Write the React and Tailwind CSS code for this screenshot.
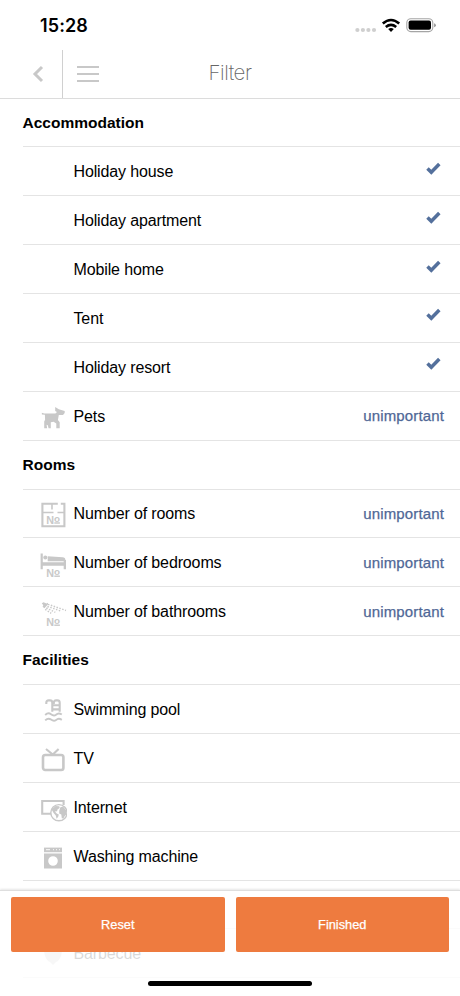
const ICON_COLOR = "#c8c8c8";

function NumberLabel({ x, y }) {
  return (
    <>
      <text x={x} y={y} fontSize="10.8" fontWeight="700" fill={ICON_COLOR}>
        N
      </text>
      <text x={x + 7.8} y={y - 2} fontSize="9.8" fontWeight="700" fill={ICON_COLOR}>
        o
      </text>
      <rect x={x + 8} y={y - 1.3} width="5.6" height="1.4" fill={ICON_COLOR} />
    </>
  );
}

// Every icon is drawn in a 28x28 box
const icons = {
  pets: (
    <path
      fill={ICON_COLOR}
      d="M2.8 8.7l2.4.9h11.2l1.6-1.5-1.8-1V3l3.6 2.3 5.9 1.6v2.2L24 10.9l-4.2.1-.9 5 1.8 2.2v6h-3.4v-4.6l-2.7-1.8-2.8.4v6H9.6l-.8-3-1.2-.5.5 3.5H5.2v-6.6l.9-1.8-.2-5-3-.3z"
    />
  ),
  rooms: (
    <>
      <path
        d="M18.8 2.8H3.4v22.4h22V2.8h-3.6"
        fill="none"
        stroke={ICON_COLOR}
        strokeWidth="2.1"
      />
      <path
        d="M13 2.5v6M4 11.5h10.5M18.5 11.5h6.5"
        fill="none"
        stroke={ICON_COLOR}
        strokeWidth="1.6"
      />
      <NumberLabel x={7.3} y={22.6} />
    </>
  ),
  bedrooms: (
    <>
      <path
        d="M1.6 3.6h2.2v8.6h20.9V10H27v9.2h-2.3v-3.4H3.8v3.4H1.6z"
        fill={ICON_COLOR}
      />
      <path d="M8.7 6.3l15 .9q2.7.3 2.7 2.8v1.2H8.7z" fill={ICON_COLOR} />
      <circle cx="6.3" cy="7.6" r="2" fill={ICON_COLOR} />
      <NumberLabel x={7.3} y={26.8} />
    </>
  ),
  bathrooms: (
    <>
      <path
        d="M2.8 4.2l1.7-1 3 1.2 1.3-.6.3 1.5-3.7 4-1.8-1.6.7-1.4z"
        fill={ICON_COLOR}
      />
      <path
        d="M9 5.3l18 6.2M8.4 7.5l13 4.4M7.3 9l9 4.3M6.2 10.3l6 4"
        fill="none"
        stroke={ICON_COLOR}
        strokeWidth="1.4"
        strokeDasharray="1.5 1.5"
      />
      <NumberLabel x={7.3} y={26.8} />
    </>
  ),
  pool: (
    <>
      <path
        d="M7.3 7V5.7q0-2.3 2.3-2.3h1.4q2.3 0 2.3 2.3v9.1M14.8 7V5.7q0-2.3 2.3-2.3h1.3q2.3 0 2.3 2.3v9.1M13.3 8.2h7.4M13.3 12.4h7.4"
        fill="none"
        stroke={ICON_COLOR}
        strokeWidth="2.1"
      />
      <path
        d="M6.2 18q3-3 5.8-.8t5 .5q2.6-2.4 5.8-.2M6.2 23.4q3-3 5.8-.8t5 .5q2.6-2.4 5.8-.2"
        fill="none"
        stroke={ICON_COLOR}
        strokeWidth="1.9"
      />
    </>
  ),
  tv: (
    <>
      <rect
        x="4"
        y="9"
        width="20.4"
        height="15"
        rx="2.2"
        fill="none"
        stroke={ICON_COLOR}
        strokeWidth="2.6"
      />
      <path
        d="M7 3l6.8 5.6L19.6 3"
        fill="none"
        stroke={ICON_COLOR}
        strokeWidth="2.1"
      />
    </>
  ),
  internet: (
    <>
      <path
        d="M12.5 18.8H3.2V6h21.4v4"
        fill="none"
        stroke={ICON_COLOR}
        strokeWidth="2.1"
      />
      <circle
        cx="19.9"
        cy="17.7"
        r="8.1"
        fill="#fff"
        stroke={ICON_COLOR}
        strokeWidth="1.4"
      />
      <path
        d="M12.6 14.5l4-3.5 3.7.2.4 1.8-2.2 1.6-.4 1.7-2.2.3 1.8 1.9 2.1.9-.6 2.3-1.6 2-.8-3.3-2.2-2.5zM21.4 12.3l2.7-.8 3.1 4 .2 3.7-1.8 2.1-1.2 2.3-1.6-.3-.5-3.9-2.1-.9.1-3z"
        fill={ICON_COLOR}
      />
    </>
  ),
  washing: (
    <>
      <rect x="5" y="3.6" width="18" height="4.6" fill={ICON_COLOR} />
      <path
        d="M7 5.6h4M14 5.6h1M17 5.6h1M20 5.6h1"
        stroke="#fff"
        strokeWidth="1.1"
        opacity="0.75"
      />
      <path
        fillRule="evenodd"
        d="M5 9.4h18v15.2H5zM14 12.2a4.8 4.8 0 1 0 0 9.6a4.8 4.8 0 1 0 0-9.6z"
        fill={ICON_COLOR}
      />
    </>
  ),
  barbecue: <path d="M5 10h18q-1 9-6 11l-3 3-3-3q-5-2-6-11z" fill={ICON_COLOR} />,
};

const sections = [
  {
    title: "Accommodation",
    items: [
      { label: "Holiday house", checked: true },
      { label: "Holiday apartment", checked: true },
      { label: "Mobile home", checked: true },
      { label: "Tent", checked: true },
      { label: "Holiday resort", checked: true },
      { label: "Pets", icon: "pets", value: "unimportant" },
    ],
  },
  {
    title: "Rooms",
    items: [
      { label: "Number of rooms", icon: "rooms", value: "unimportant" },
      { label: "Number of bedrooms", icon: "bedrooms", value: "unimportant" },
      { label: "Number of bathrooms", icon: "bathrooms", value: "unimportant" },
    ],
  },
  {
    title: "Facilities",
    items: [
      { label: "Swimming pool", icon: "pool" },
      { label: "TV", icon: "tv" },
      { label: "Internet", icon: "internet" },
      { label: "Washing machine", icon: "washing" },
      { label: "" },
      { label: "Barbecue", icon: "barbecue" },
    ],
  },
];

function StatusBar() {
  return (
    <div className="flex h-[50px] shrink-0 items-center justify-between pl-10 pr-6">
      <span className="pt-[2px] font-['Inter'] text-[18px] font-semibold leading-none tracking-[0.1px]">
        15:28
      </span>
      <svg width="82" height="18" viewBox="0 0 82 18">
        <g fill="#cfcfcf">
          <circle cx="3.4" cy="14" r="2.1" />
          <circle cx="8.9" cy="14" r="2.1" />
          <circle cx="14.4" cy="14" r="2.1" />
          <circle cx="20" cy="14" r="2.1" />
        </g>
        <g fill="none" stroke="#000" strokeWidth="2.6">
          <path d="M28.8 7.5q8.2-7 16.4 0" />
          <path d="M31.8 10.9q5.2-4.2 10.4 0" />
        </g>
        <path d="M34.2 12.9q2.8-2 5.6 0L37 15.9z" />
        <rect
          x="52.8"
          y="2.8"
          width="26"
          height="12.8"
          rx="4"
          fill="none"
          stroke="#a5a5a5"
          strokeWidth="1.1"
        />
        <rect x="54.6" y="4.6" width="22.4" height="9.2" rx="2" />
        <path d="M80.2 7.2q1.6.5 1.6 2t-1.6 2z" fill="#8c8c8c" />
      </svg>
    </div>
  );
}

function NavBar() {
  return (
    <div className="grid h-[48.5px] shrink-0 grid-cols-[110px_1fr_110px] border-b border-[#dcdcdc]">
      <div className="flex items-center">
        <button className="flex h-full w-[63px] items-center border-r border-[#d0d0d0] pl-8">
          <svg width="12" height="18" viewBox="0 0 12 18">
            <path
              d="M10 2L3 9l7 7"
              fill="none"
              stroke="#c8c8c8"
              strokeWidth="3"
            />
          </svg>
        </button>
        <button className="ml-[14px] flex w-[22px] flex-col gap-[5px]">
          <span className="h-[2px] bg-[#c8c8c8]" />
          <span className="h-[2px] bg-[#c8c8c8]" />
          <span className="h-[2px] bg-[#c8c8c8]" />
        </button>
      </div>
      <h1 className="self-center pb-[2px] text-center font-['Inter'] text-[20.5px] font-extralight leading-none tracking-[-0.5px] text-[#666]">
        Filter
      </h1>
    </div>
  );
}

function FilterRow({ label, icon, checked, value }) {
  return (
    <li className="ml-[23px] flex h-[48.875px] items-center border-b border-[#e4e4e4] pr-4">
      <span className="flex w-[50.5px] shrink-0 justify-center pl-[9px] pt-1">
        {icon && (
          <svg
            width="28"
            height="28"
            viewBox="0 0 28 28"
            className="font-['Liberation_Sans']"
          >
            {icons[icon]}
          </svg>
        )}
      </span>
      <span className="flex-1 pt-[2px] text-[16px] tracking-[-0.13px]">
        {label}
      </span>
      {checked && (
        <svg width="15" height="13" viewBox="0 0 15 13" className="mb-[6px] mr-[3px]">
          <path
            d="M1.5 6.5L5.3 10.3 13.3 2"
            fill="none"
            stroke="#54709c"
            strokeWidth="3.5"
          />
        </svg>
      )}
      {value && (
        <span className="pt-[2px] text-[15px] tracking-[0.14px] text-[#4f6796] [-webkit-text-stroke:0.25px_#4f6796]">
          {value}
        </span>
      )}
    </li>
  );
}

export default function App() {
  return (
    <div className="relative flex h-[996px] w-[460px] flex-col overflow-hidden bg-white font-['Liberation_Sans',Arial,sans-serif] text-black">
      <StatusBar />
      <NavBar />

      <main className="min-h-0 flex-1 overflow-hidden">
        {sections.map((section) => (
          <section key={section.title}>
            <h2 className="ml-[22.5px] flex h-[48.875px] items-center border-b border-[#e4e4e4] text-[15.5px] font-bold">
              {section.title}
            </h2>
            <ul>
              {section.items.map((item, i) => (
                <FilterRow key={i} {...item} />
              ))}
            </ul>
          </section>
        ))}
      </main>

      {/* Actions float over the scrolling list */}
      <footer className="absolute inset-x-0 bottom-0 h-[106px] border-t border-[#dedede] bg-white/85 px-[11px] pt-[6px] shadow-[0_-1px_2px_rgba(0,0,0,0.1)]">
        <div className="grid grid-cols-2 gap-[11px]">
          <button className="h-[55px] rounded-[2px] bg-[#ee7b3f] text-[12.8px] text-white [-webkit-text-stroke:0.25px_white]">
            Reset
          </button>
          <button className="h-[55px] rounded-[2px] bg-[#ee7b3f] text-[12.8px] text-white [-webkit-text-stroke:0.25px_white]">
            Finished
          </button>
        </div>
        <div className="mx-auto mt-[29px] h-[5px] w-[164px] rounded-full bg-black" />
      </footer>
    </div>
  );
}
